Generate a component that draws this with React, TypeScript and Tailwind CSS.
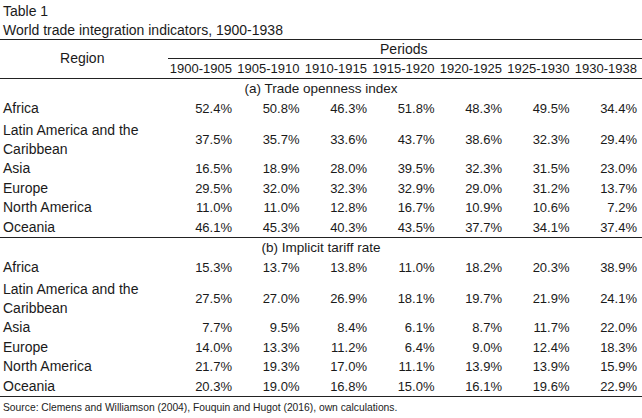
import React from 'react';

type Row = { region: string; values: string[]; tall?: boolean };

const openness: Row[] = [
  { region: 'Africa', values: ['52.4%', '50.8%', '46.3%', '51.8%', '48.3%', '49.5%', '34.4%'] },
  { region: 'Latin America and the Caribbean', values: ['37.5%', '35.7%', '33.6%', '43.7%', '38.6%', '32.3%', '29.4%'], tall: true },
  { region: 'Asia', values: ['16.5%', '18.9%', '28.0%', '39.5%', '32.3%', '31.5%', '23.0%'] },
  { region: 'Europe', values: ['29.5%', '32.0%', '32.3%', '32.9%', '29.0%', '31.2%', '13.7%'] },
  { region: 'North America', values: ['11.0%', '11.0%', '12.8%', '16.7%', '10.9%', '10.6%', '7.2%'] },
  { region: 'Oceania', values: ['46.1%', '45.3%', '40.3%', '43.5%', '37.7%', '34.1%', '37.4%'] },
];

const tariff: Row[] = [
  { region: 'Africa', values: ['15.3%', '13.7%', '13.8%', '11.0%', '18.2%', '20.3%', '38.9%'] },
  { region: 'Latin America and the Caribbean', values: ['27.5%', '27.0%', '26.9%', '18.1%', '19.7%', '21.9%', '24.1%'], tall: true },
  { region: 'Asia', values: ['7.7%', '9.5%', '8.4%', '6.1%', '8.7%', '11.7%', '22.0%'] },
  { region: 'Europe', values: ['14.0%', '13.3%', '11.2%', '6.4%', '9.0%', '12.4%', '18.3%'] },
  { region: 'North America', values: ['21.7%', '19.3%', '17.0%', '11.1%', '13.9%', '13.9%', '15.9%'] },
  { region: 'Oceania', values: ['20.3%', '19.0%', '16.8%', '15.0%', '16.1%', '19.6%', '22.9%'] },
];

const periods = ['1900-1905', '1905-1910', '1910-1915', '1915-1920', '1920-1925', '1925-1930', '1930-1938'];

const DataRow = ({ row }: { row: Row }) => (
  <div
    className={`grid grid-cols-[164.5px_repeat(7,67.5px)_1fr] items-center ${
      row.tall ? 'h-[41px]' : 'h-[19.5px]'
    }`}
  >
    <div className={`pl-[3px] text-[14px] leading-[19px] ${row.tall ? 'w-[160px] pt-[2px]' : 'whitespace-nowrap'}`}>
      {row.tall ? (
        <>
          Latin America and the
          <br />
          Caribbean
        </>
      ) : (
        row.region
      )}
    </div>
    {row.values.map((v, i) => (
      <div key={i} className={`text-right leading-[19px] ${row.tall ? 'pt-[2px]' : ''}`}>
        {v}
      </div>
    ))}
    <div />
  </div>
);

const Section = ({ label, rows }: { label: string; rows: Row[] }) => (
  <div className="border-b border-[#222]">
    <div className="h-[19.5px] leading-[20px] text-center text-[13.5px]">{label}</div>
    {rows.map((r) => (
      <DataRow key={r.region} row={r} />
    ))}
  </div>
);

export default function App() {
  return (
    <div className="w-[642px] h-[418px] bg-white text-[#1a1a1a] font-['Liberation_Sans',Arial,sans-serif] text-[13px] overflow-hidden">
      <div className="pt-[2px] pl-[3px] border-b border-[#222] text-[14px]">
        <div className="leading-[19px]">Table 1</div>
        <div className="leading-[18px]">World trade integration indicators, 1900-1938</div>
      </div>

      <div className="grid grid-cols-[164.5px_repeat(7,67.5px)_1fr] grid-rows-[19px_19px] border-b border-[#222]">
        <div className="row-span-2 flex items-center justify-center text-[14px] pb-[1px]">Region</div>
        <div className="col-span-8 ml-[3px] border-b border-[#222] text-center leading-[18px] pr-[2px] text-[14px]">
          Periods
        </div>
        {periods.map((p) => (
          <div key={p} className="text-right leading-[20px] whitespace-nowrap">
            {p}
          </div>
        ))}
        <div />
      </div>

      <Section label="(a) Trade openness index" rows={openness} />
      <Section label="(b) Implicit tariff rate" rows={tariff} />

      <div className="pl-[3px] pt-[4px] text-[10.3px] leading-[14px] text-[#222]">
        Source: Clemens and Williamson (2004), Fouquin and Hugot (2016), own calculations.
      </div>
    </div>
  );
}
